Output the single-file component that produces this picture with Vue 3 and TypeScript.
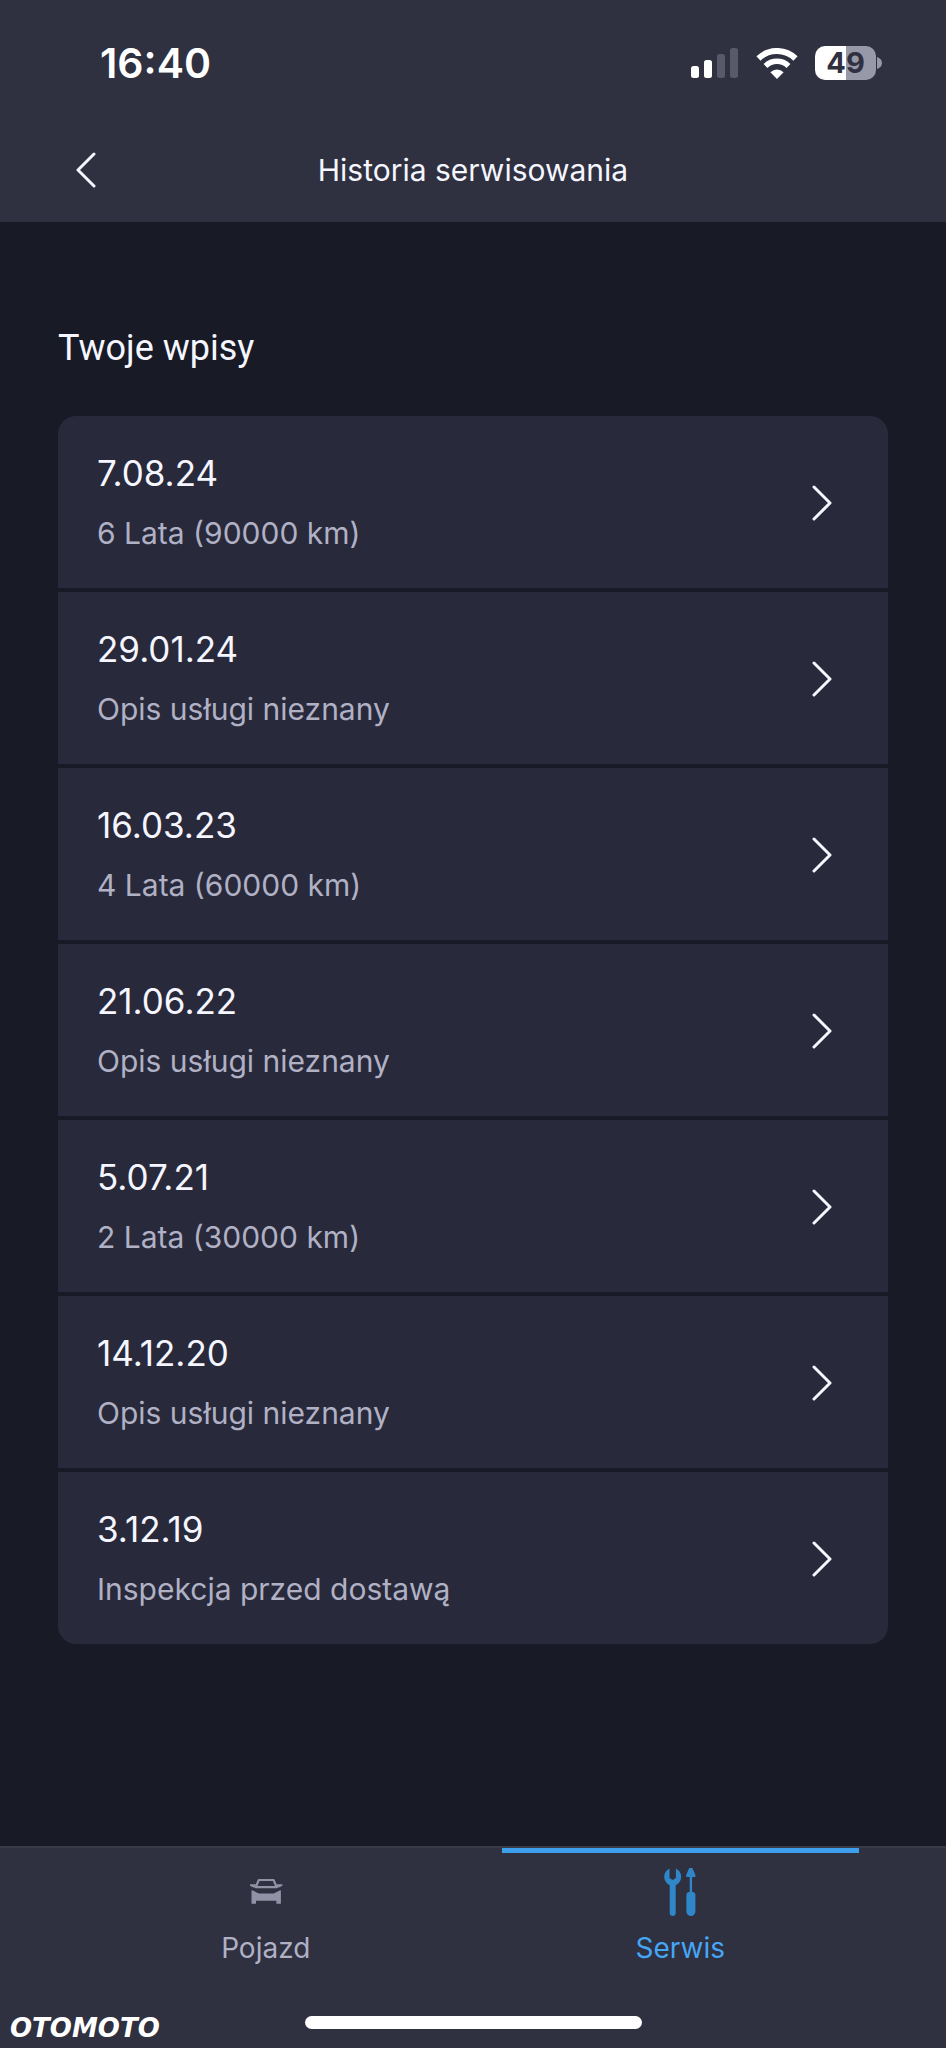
<script setup lang="ts">
import { ref } from 'vue'

interface Entry {
  date: string
  description: string
}

type TabId = 'vehicle' | 'service'

const entries: Entry[] = [
  { date: '7.08.24', description: '6 Lata (90000 km)' },
  { date: '29.01.24', description: 'Opis usługi nieznany' },
  { date: '16.03.23', description: '4 Lata (60000 km)' },
  { date: '21.06.22', description: 'Opis usługi nieznany' },
  { date: '5.07.21', description: '2 Lata (30000 km)' },
  { date: '14.12.20', description: 'Opis usługi nieznany' },
  { date: '3.12.19', description: 'Inspekcja przed dostawą' },
]

const activeTab = ref<TabId>('service')
</script>

<template>
  <div class="screen">
    <header class="top">
      <div class="status">
        <time class="clock">16:40</time>
        <div class="indicators">
          <svg class="signal" viewBox="0 0 48 30" aria-hidden="true">
            <rect x="0" y="18" width="8" height="12" rx="2.500" fill="#fff" />
            <rect x="13" y="12" width="8" height="18" rx="2.500" fill="#fff" />
            <rect x="26" y="6" width="8" height="24" rx="2.500" fill="#595a69" />
            <rect x="39" y="0" width="8" height="30" rx="2.500" fill="#595a69" />
          </svg>
          <svg class="wifi" viewBox="0 0 42 31" fill="none" stroke="#fff" aria-hidden="true">
            <path d="M2.5 10.5a26.5 26.5 0 0 1 37 0" stroke-width="6" />
            <path d="M9.5 18a16.5 16.5 0 0 1 23 0" stroke-width="5.5" />
            <path d="M21 31l-6.6-6.7a9.4 9.4 0 0 1 13.2 0z" fill="#fff" stroke="none" />
          </svg>
          <div class="battery">
            <span class="charge">49</span>
            <svg class="nub" viewBox="0 0 5 12" aria-hidden="true">
              <path d="M0 0c3 1 5 3.300 5 6s-2 5-5 6z" fill="#9899a8" />
            </svg>
          </div>
        </div>
      </div>
      <div class="nav">
        <button class="back" type="button" aria-label="Wstecz">
          <svg class="chevron" viewBox="0 0 20 36" aria-hidden="true">
            <path d="M18 2 2 18l16 16" />
          </svg>
        </button>
        <h1 class="title">Historia serwisowania</h1>
      </div>
    </header>

    <main class="content">
      <h2 class="heading">Twoje wpisy</h2>
      <ul class="entries">
        <li v-for="entry in entries" :key="entry.date">
          <button class="entry" type="button">
            <span class="texts">
              <span class="date">{{ entry.date }}</span>
              <span class="description">{{ entry.description }}</span>
            </span>
            <svg class="chevron" viewBox="0 0 20 36" aria-hidden="true">
              <path d="m2 2 16 16L2 34" />
            </svg>
          </button>
        </li>
      </ul>
    </main>

    <footer class="bottom">
      <nav class="tabs">
        <button class="tab" :class="{ active: activeTab === 'vehicle' }" type="button" @click="activeTab = 'vehicle'">
          <svg class="icon" viewBox="0 0 48 48" aria-hidden="true">
            <path d="M13.800 19.200 16.800 12h14.800l3 7.200z" fill="none" stroke="currentColor" stroke-width="2.200" stroke-linejoin="round" />
            <path d="M8 16.200h6l-.8 3.200h-1.700L8 17.800zM40.400 16.200h-6l.8 3.200h1.700l3.500-1.600z" fill="currentColor" />
            <path d="M9.500 22.200c3.500.4 4.800 3.300 8.500 3.300h12.400c3.700 0 5-2.900 8.500-3.300v13.600h-4.500v-3H14v3H9.500z" fill="currentColor" />
          </svg>
          <span class="label">Pojazd</span>
        </button>
        <button class="tab" :class="{ active: activeTab === 'service' }" type="button" @click="activeTab = 'service'">
          <svg class="icon" viewBox="0 0 48 48" fill="currentColor" aria-hidden="true">
            <path d="M13.500 .5v9.500l3.200 2 3.200-2V.5c3.200 1.500 5.300 4.700 5.300 8.300 0 3.700-2.200 6.800-5.500 8.400V45a3 3 0 0 1-6 0V17.200C10.400 15.600 8.200 12.500 8.200 8.800c0-3.600 2.100-6.800 5.300-8.300z" />
            <path d="M33.200 0h3.200l3 7v2h-3.300v15h.3a3 3 0 0 1 3 3v16.500a4.500 4.500 0 0 1-9 0V27a3 3 0 0 1 3-3h.3V9h-3.500V7z" />
          </svg>
          <span class="label">Serwis</span>
        </button>
      </nav>
      <div class="home-row">
        <span class="brand">OTOMOTO</span>
        <span class="home-bar"></span>
      </div>
    </footer>
  </div>
</template>

<style>
html,
body {
  margin: 0;
  background: #181a25;
}
</style>

<style scoped>
.screen {
  min-height: 100vh;
  display: flex;
  flex-direction: column;
  background: #181a25;
  color: #f5f6ff;
  font-family: Inter, 'Liberation Sans', sans-serif;
}

button {
  border: 0;
  margin: 0;
  padding: 0;
  background: none;
  color: inherit;
  font: inherit;
  cursor: pointer;
}

.top {
  height: 222px;
  background: #2f3040;
}

.status {
  height: 126px;
  box-sizing: border-box;
  padding: 0 64px 0 100px;
  display: flex;
  align-items: center;
  justify-content: space-between;
}

.clock {
  font-size: 41px;
  font-weight: 600;
  line-height: 48px;
  color: #fff;
}

.indicators {
  display: flex;
  align-items: center;
  gap: 17px;
}

.signal {
  width: 48px;
  height: 30px;
}

.wifi {
  width: 42px;
  height: 31px;
}

.battery {
  display: flex;
  align-items: center;
  gap: 1px;
}

.charge {
  width: 61px;
  height: 34px;
  border-radius: 10px;
  background: linear-gradient(90deg, #fff 50%, #9899a8 50%);
  color: #2f3040;
  font-size: 29px;
  font-weight: 700;
  line-height: 34px;
  text-align: center;
}

.nub {
  width: 5px;
  height: 12px;
}

.nav {
  display: grid;
  grid-template-columns: 60px 1fr 60px;
  align-items: center;
  padding: 0 56px;
  height: 88px;
}

.back {
  height: 60px;
  display: flex;
  align-items: center;
  justify-content: center;
}

.chevron {
  width: 20px;
  height: 36px;
  fill: none;
  stroke: #f5f6ff;
  stroke-width: 3;
  stroke-linecap: round;
  stroke-linejoin: round;
}

.title {
  margin: 0;
  font-size: 30px;
  font-weight: 400;
  line-height: 40px;
  text-align: center;
}

.content {
  flex: 1;
  padding: 96px 58px;
}

.heading {
  margin: 0 0 38px;
  font-family: Roboto, sans-serif;
  font-size: 36px;
  font-weight: 400;
  line-height: 60px;
}

.entries {
  list-style: none;
  margin: 0;
  padding: 0;
  display: flex;
  flex-direction: column;
  gap: 4px;
  border-radius: 18px;
  overflow: hidden;
}

.entry {
  width: 100%;
  height: 172px;
  box-sizing: border-box;
  padding: 2px 56px 0 39px;
  display: flex;
  align-items: center;
  justify-content: space-between;
  background: #28293a;
  text-align: left;
}

.texts {
  display: flex;
  flex-direction: column;
  gap: 16px;
}

.date {
  font-size: 35px;
  line-height: 44px;
}

.description {
  font-size: 30px;
  line-height: 44px;
  color: #b0b1c5;
}

.bottom {
  height: 202px;
  box-sizing: border-box;
  border-top: 2px solid #3a3b49;
  background: #2f3040;
}

.tabs {
  display: grid;
  grid-template-columns: 1fr 1fr;
  gap: 57px;
  padding: 0 87px;
}

.tab {
  height: 128px;
  box-sizing: border-box;
  border-top: 5px solid transparent;
  padding-top: 15px;
  display: flex;
  flex-direction: column;
  align-items: center;
  gap: 14px;
  color: #b0b1c5;
}

.tab.active {
  border-color: #3ea0ed;
  color: #45a6f5;
}

.icon {
  width: 48px;
  height: 48px;
  color: #9192a5;
}

.active .icon {
  color: #2f86c8;
}

.label {
  font-size: 28px;
  line-height: 36px;
}

.home-row {
  display: grid;
  grid-template-columns: 1fr 337px 1fr;
  align-items: start;
  height: 72px;
  box-sizing: border-box;
  padding: 40px 10px 0;
}

.brand {
  font-family: 'DejaVu Sans', sans-serif;
  font-size: 26px;
  font-weight: 700;
  font-style: italic;
  line-height: 24px;
  color: #fff;
}

.home-bar {
  height: 13px;
  border-radius: 7px;
  background: #fff;
}
</style>
